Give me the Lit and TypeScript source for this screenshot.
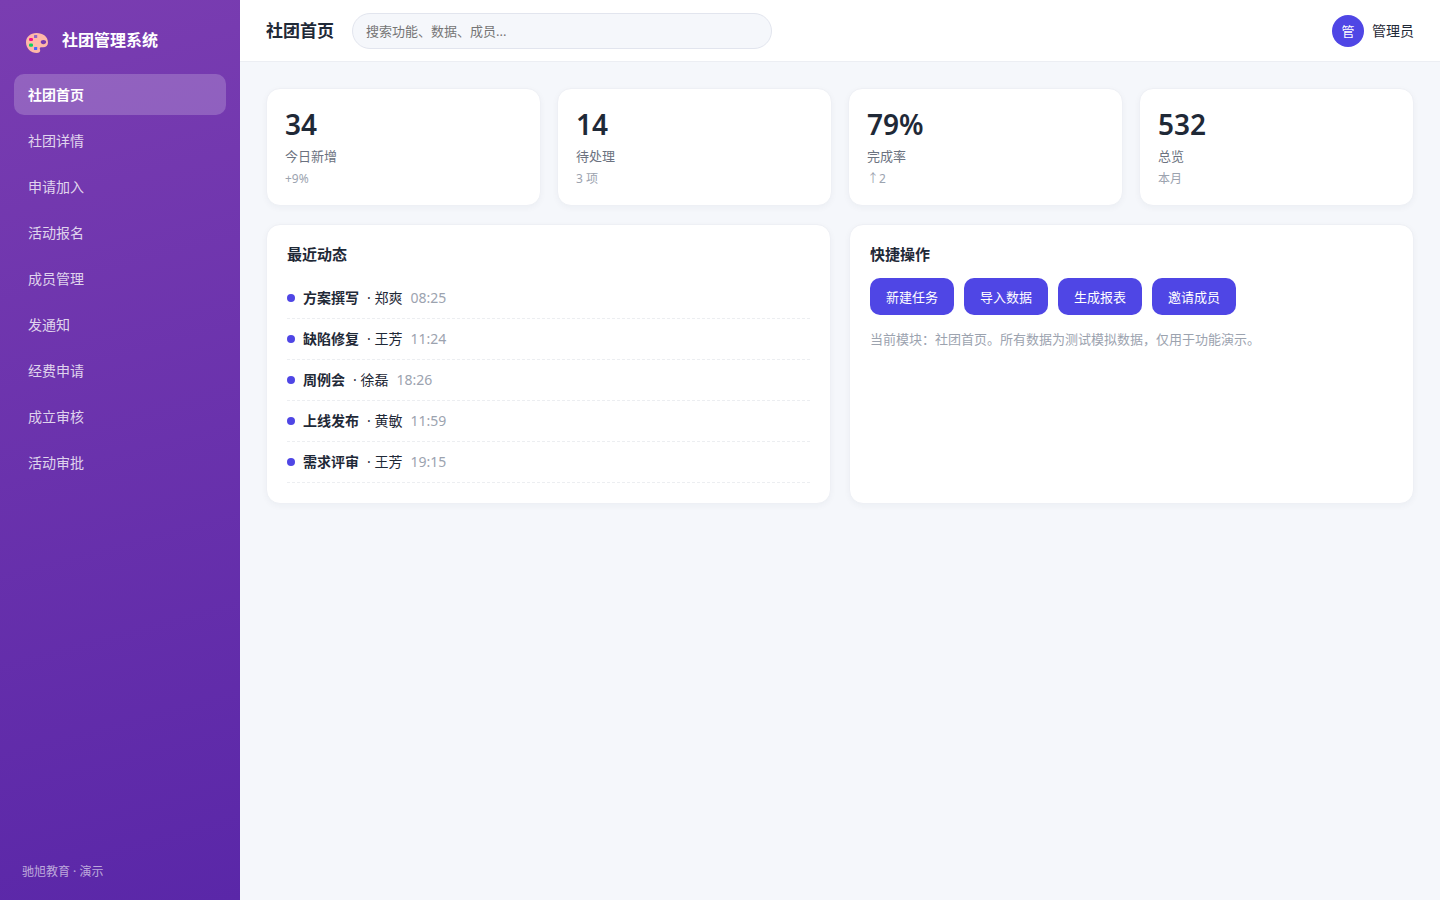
import { LitElement, html, css } from "lit";
import { customElement, state } from "lit/decorators.js";

const NAV = ["社团首页", "社团详情", "申请加入", "活动报名", "成员管理", "发通知", "经费申请", "成立审核", "活动审批"];

const STATS = [
  { value: "34", label: "今日新增", note: "+9%" },
  { value: "14", label: "待处理", note: "3 项" },
  { value: "79%", label: "完成率", note: "↑2" },
  { value: "532", label: "总览", note: "本月" },
];

const FEED = [
  { title: "方案撰写", who: "郑爽", time: "08:25" },
  { title: "缺陷修复", who: "王芳", time: "11:24" },
  { title: "周例会", who: "徐磊", time: "18:26" },
  { title: "上线发布", who: "黄敏", time: "11:59" },
  { title: "需求评审", who: "王芳", time: "19:15" },
];

const ACTIONS = ["新建任务", "导入数据", "生成报表", "邀请成员"];

@customElement("app-root")
export class AppRoot extends LitElement {
  @state() private active = 0;

  static styles = css`
    :host {
      display: flex;
      min-height: 100vh;
      background: #f5f7fb;
      color: #1f2937;
      font-family: "Noto Sans", "Noto Sans CJK SC", sans-serif;
      font-size: 14px;
      line-height: 20px;
    }
    * {
      box-sizing: border-box;
    }
    .sidebar {
      display: flex;
      flex-direction: column;
      flex: none;
      width: 240px;
      padding: 22px 14px 18px;
      background: linear-gradient(165deg, #7a3db1, #5a27a8);
      color: #fff;
    }
    .brand {
      display: flex;
      align-items: center;
      gap: 12px;
      height: 36px;
      padding: 0 10px;
      margin-bottom: 16px;
      font-size: 16px;
      font-weight: 600;
    }
    .logo {
      width: 26px;
      height: 26px;
    }
    .nav {
      display: flex;
      flex-direction: column;
      flex: 1;
      gap: 5px;
    }
    .item {
      display: block;
      padding: 11px 14px 10px;
      border-radius: 10px;
      color: rgba(255, 255, 255, 0.8);
      text-decoration: none;
    }
    .item.on {
      background: rgba(255, 255, 255, 0.2);
      color: #fff;
      font-weight: 700;
    }
    .foot {
      padding: 0 8px;
      color: rgba(255, 255, 255, 0.6);
      font-size: 12px;
    }
    .main {
      flex: 1;
      min-width: 0;
    }
    .topbar {
      display: flex;
      align-items: center;
      gap: 18px;
      height: 62px;
      padding: 0 26px;
      background: #fff;
      border-bottom: 1px solid #eceef3;
    }
    .heading {
      margin: 0;
      font-size: 17px;
      font-weight: 700;
    }
    .search {
      flex: 0 1 420px;
      min-width: 0;
      height: 36px;
      padding: 0 13px;
      border: 1px solid #e2e5ee;
      border-radius: 18px;
      background: #f5f7fb;
      color: inherit;
      font: inherit;
      font-size: 13px;
    }
    .search::placeholder {
      color: #757575;
    }
    .user {
      display: flex;
      align-items: center;
      gap: 8px;
      margin-left: auto;
    }
    .avatar {
      display: grid;
      place-items: center;
      width: 32px;
      height: 32px;
      border-radius: 50%;
      background: #4f46e5;
      color: #fff;
      font-size: 13px;
    }
    .content {
      display: grid;
      gap: 18px;
      padding: 26px;
    }
    .stats {
      display: grid;
      grid-template-columns: repeat(4, 1fr);
      gap: 16px;
    }
    .panels {
      display: grid;
      grid-template-columns: repeat(2, 1fr);
      gap: 18px;
    }
    .card {
      border: 1px solid #eef0f5;
      border-radius: 14px;
      background: #fff;
      box-shadow: 0 2px 6px rgba(30, 41, 80, 0.04);
    }
    .stat {
      padding: 16px 18px;
    }
    .value {
      font-size: 28px;
      font-weight: 600;
      line-height: 38px;
    }
    .label {
      margin: 3px 0;
      color: #6b7280;
      font-size: 13px;
    }
    .note {
      color: #9ca3af;
      font-size: 12px;
    }
    .panel {
      padding: 20px;
    }
    .title {
      margin: 0 0 15px;
      font-size: 15px;
      font-weight: 600;
      line-height: 18px;
    }
    .feed {
      margin: 0;
      padding: 0;
      list-style: none;
    }
    .row {
      display: flex;
      align-items: center;
      gap: 8px;
      padding: 10px 0;
      border-bottom: 1px dashed #eceef1;
    }
    .dot {
      width: 8px;
      height: 8px;
      border-radius: 50%;
      background: #4f46e5;
    }
    .time {
      color: #9ca3af;
    }
    .actions {
      display: flex;
      flex-wrap: wrap;
      gap: 10px;
    }
    .btn {
      height: 37px;
      padding: 0 16px;
      border: 0;
      border-radius: 10px;
      background: #4f46e5;
      color: #fff;
      font: inherit;
      font-size: 13px;
      cursor: pointer;
    }
    .hint {
      margin: 14px 0 0;
      color: #9ca3af;
      font-size: 13px;
    }
  `;

  private go(e: Event, i: number) {
    e.preventDefault();
    this.active = i;
  }

  render() {
    return html`
      <aside class="sidebar">
        <div class="brand">
          <svg class="logo" viewBox="0 0 26 26" aria-hidden="true">
            <path
              fill="#ffb8a8"
              fill-rule="evenodd"
              d="M12.500 6C6.400 6 2 10 2 15.200C2 21.200 6.800 26 12.800 26C15 26 16.200 25 16.200 23.300C16.200 22.300 15.600 21.800 15.800 20.900C16 20.100 17 20.100 18.200 20.300C21.800 20.700 24 18.700 24 15.500C24 9.800 19 6 12.500 6ZM19.400 13C21 13 22.200 13.900 22.200 15C22.200 16.200 21 17.200 19.400 17.200C17.800 17.200 16.700 16.200 16.700 15C16.700 13.900 17.800 13 19.400 13Z"
            />
            <rect x="10" y="8" width="3.200" height="3" rx=".6" fill="#9164c8" />
            <rect x="5" y="11" width="4" height="3" rx="1.300" fill="#f5108c" />
            <rect x="5" y="16.500" width="4" height="3.300" rx="1.300" fill="#10d060" />
            <rect x="10" y="20" width="3.200" height="3" rx=".6" fill="#4468ff" />
          </svg>
          <span>社团管理系统</span>
        </div>
        <nav class="nav">
          ${NAV.map(
            (name, i) => html`<a
              class="item ${i === this.active ? "on" : ""}"
              href="#"
              @click=${(e: Event) => this.go(e, i)}
              >${name}</a
            >`
          )}
        </nav>
        <div class="foot">驰旭教育 · 演示</div>
      </aside>
      <div class="main">
        <header class="topbar">
          <h1 class="heading">${NAV[this.active]}</h1>
          <input class="search" type="search" aria-label="搜索" placeholder="搜索功能、数据、成员..." />
          <div class="user"><span class="avatar">管</span><span>管理员</span></div>
        </header>
        <main class="content">
          <section class="stats">
            ${STATS.map(
              (s) => html`<div class="card stat">
                <div class="value">${s.value}</div>
                <div class="label">${s.label}</div>
                <div class="note">${s.note}</div>
              </div>`
            )}
          </section>
          <section class="panels">
            <div class="card panel">
              <h2 class="title">最近动态</h2>
              <ul class="feed">
                ${FEED.map(
                  (f) => html`<li class="row">
                    <span class="dot"></span><strong>${f.title}</strong><span>· ${f.who}</span
                    ><span class="time">${f.time}</span>
                  </li>`
                )}
              </ul>
            </div>
            <div class="card panel">
              <h2 class="title">快捷操作</h2>
              <div class="actions">
                ${ACTIONS.map((a) => html`<button class="btn" type="button">${a}</button>`)}
              </div>
              <p class="hint">当前模块：${NAV[this.active]}。所有数据为测试模拟数据，仅用于功能演示。</p>
            </div>
          </section>
        </main>
      </div>
    `;
  }
}
